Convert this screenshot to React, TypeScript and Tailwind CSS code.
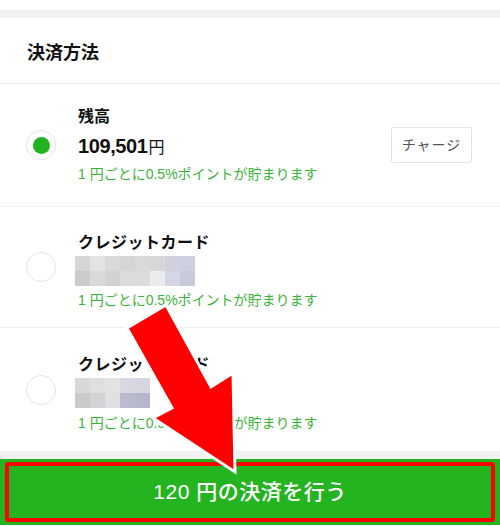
import React from "react";

const font = { fontFamily: '"Liberation Sans", "Noto Sans CJK JP", sans-serif' };

const block2 = [
  "bg-[#d6d6d8]", "bg-[#e3e3e5]", "bg-[#d9d9db]", "bg-[#d5d5d7]", "bg-[#d9d9db]", "bg-[#d7d7d9]", "bg-[#d0d1dd]", "bg-[#cecfdf]",
  "bg-[#cbcbce]", "bg-[#d9d9db]", "bg-[#d2d2d4]", "bg-[#dcdcde]", "bg-[#dbdbde]", "bg-[#ececee]", "bg-[#d5d6e3]", "bg-[#c8c9d9]",
];
const block3 = [
  "bg-[#d8d8da]", "bg-[#dfdfe1]", "bg-[#e3e3e3]", "bg-[#d8d8e2]", "bg-[#d6d6e0]",
  "bg-[#cacacd]", "bg-[#d3d3d5]", "bg-[#e0e0e0]", "bg-[#babbcf]", "bg-[#b6b7c9]",
];

function Radio({ checked }: { checked?: boolean }) {
  return (
    <div className="w-[30px] h-[30px] rounded-full border border-[#e4e4e4] flex items-center justify-center shrink-0">
      {checked && <div className="w-[17px] h-[17px] rounded-full bg-[#20b21f]" />}
    </div>
  );
}

function Points() {
  return (
    <div className="text-[14px] leading-[18px] text-[#3bb33b]">
      1 円ごとに0.5%ポイントが貯まります
    </div>
  );
}

function Blocks({ cells, cols }: { cells: string[]; cols: number }) {
  return (
    <div className={cols === 8 ? "grid grid-cols-8 w-[120px]" : "grid grid-cols-5 w-[75px]"}>
      {cells.map((c, i) => (
        <div key={i} className={`h-[15px] ${c}`} />
      ))}
    </div>
  );
}

export default function App() {
  return (
    <div className="relative w-[500px] h-[526px] overflow-hidden bg-white" style={font}>
      <div className="h-[10px] bg-white border-b border-[#f6f6f6]" />
      <div className="h-[8px] bg-[#f1f1f1]" />
      <div className="h-[66px] flex items-center pl-[27px] pt-[6px] border-b border-[#ececec]">
        <span className="text-[18px] font-bold text-[#111]">決済方法</span>
      </div>

      {/* Row 1 */}
      <div className="h-[123px] flex items-center pl-[26px] pr-[28px] border-b border-[#efefef]">
        <Radio checked />
        <div className="ml-[22px] flex-1 flex flex-col">
          <div className="text-[16px] leading-[20px] font-bold text-[#111]">残高</div>
          <div className="mt-[6px] leading-[26px] text-[#111] flex items-baseline">
            <span className="text-[20px] font-bold tracking-[-0.4px]">109,501</span>
            <span className="text-[16px] ml-[1px]">円</span>
          </div>
          <div className="mt-[4px]">
            <Points />
          </div>
        </div>
        <div className="w-[81px] h-[36px] border border-[#e3e3e3] rounded-[2px] flex items-center justify-center text-[14px] text-[#555] tracking-[1px]">
          チャージ
        </div>
      </div>

      {/* Row 2 */}
      <div className="h-[121px] flex items-center pl-[26px] border-b border-[#efefef]">
        <Radio />
        <div className="ml-[22px] pt-[7px] flex flex-col">
          <div className="text-[16px] leading-[20px] font-bold text-[#111] tracking-[0.5px]">クレジットカード</div>
          <div className="mt-[3px] -ml-[3px]">
            <Blocks cells={block2} cols={8} />
          </div>
          <div className="mt-[5px]">
            <Points />
          </div>
        </div>
      </div>

      {/* Row 3 */}
      <div className="h-[123px] flex items-center pl-[26px]">
        <Radio />
        <div className="ml-[22px] pt-[7px] flex flex-col">
          <div className="text-[16px] leading-[20px] font-bold text-[#111] tracking-[0.5px]">クレジットカード</div>
          <div className="mt-[3px] -ml-[3px]">
            <Blocks cells={block3} cols={5} />
          </div>
          <div className="mt-[6px]">
            <Points />
          </div>
        </div>
      </div>

      <div className="h-[8px] bg-[#f1f1f1]" />

      {/* Footer */}
      <div className="h-[66px] bg-[#23b41f] px-[5px] py-[3px]">
        <div className="h-full border-4 border-[#ff0000] rounded-[3px] flex items-center justify-center">
          <span className="text-[21px] font-medium text-white tracking-[0.5px]">120 円の決済を行う</span>
        </div>
      </div>

      {/* Arrow overlay */}
      <svg className="absolute inset-0 pointer-events-none" width="500" height="526" viewBox="0 0 500 526">
        <polygon
          points="127,328 166,305 211,387 233,373 235,472 153,418 172,408"
          fill="#ff0000"
          stroke="#ffffff"
          strokeWidth="3"
          strokeLinejoin="miter"
        />
      </svg>
    </div>
  );
}
